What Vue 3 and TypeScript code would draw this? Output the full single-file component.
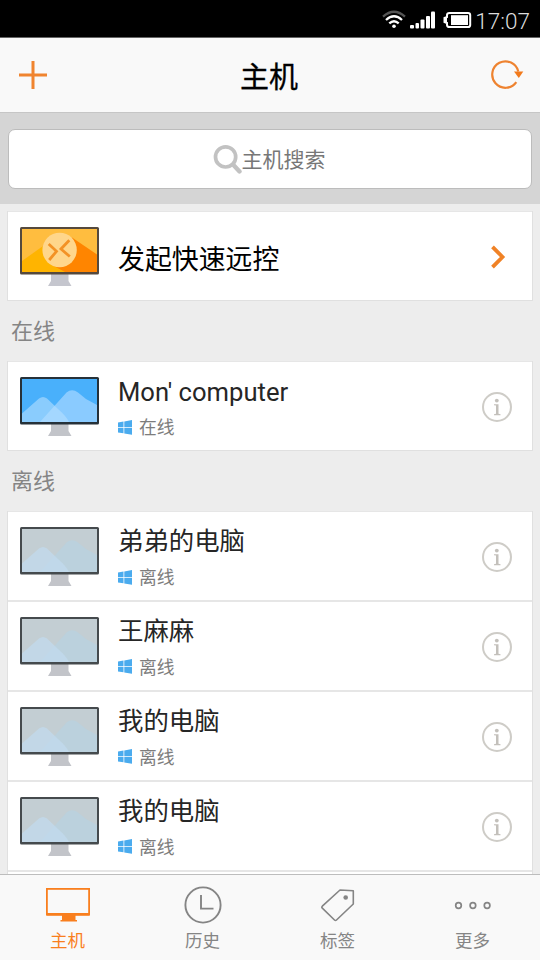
<script setup lang="ts">
interface Host {
  id: number
  name: string
}

interface Tab {
  id: 'hosts' | 'history' | 'tags' | 'more'
  label: string
}

const onlineHosts: Host[] = [{ id: 1, name: "Mon' computer" }]

const offlineHosts: Host[] = [
  { id: 2, name: '弟弟的电脑' },
  { id: 3, name: '王麻麻' },
  { id: 4, name: '我的电脑' },
  { id: 5, name: '我的电脑' },
]

const sections = [
  { key: 'online', label: '在线', hosts: onlineHosts },
  { key: 'offline', label: '离线', hosts: offlineHosts },
]

const tabs: Tab[] = [
  { id: 'hosts', label: '主机' },
  { id: 'history', label: '历史' },
  { id: 'tags', label: '标签' },
  { id: 'more', label: '更多' },
]

const activeTab: Tab['id'] = 'hosts'
</script>

<template>
  <div class="screen">
    <div class="status">
      <svg class="wifi" width="24" height="20" viewBox="0 0 24 20" fill="none" stroke-width="2.3">
        <path d="M1 6.600Q12-3.200 23 6.600" stroke="#555" />
        <path d="M4 10Q12 2.600 20 10" stroke="#fff" />
        <path d="M7.300 13.400Q12 9 16.700 13.400" stroke="#fff" />
        <circle cx="12" cy="16.3" r="1.8" fill="#fff" />
      </svg>
      <svg class="signal" width="26" height="18" viewBox="0 0 26 18" fill="#fff">
        <rect x="0" y="14" width="4" height="3.5" rx="1" />
        <rect x="5.5" y="12" width="3.5" height="5.5" rx="1" />
        <rect x="10.5" y="8.5" width="4" height="9" rx="1" />
        <rect x="16" y="5" width="4" height="12.5" rx="1" />
        <rect x="21" y="0.5" width="4" height="17" rx="1" />
      </svg>
      <svg class="battery" width="29" height="18" viewBox="0 0 29 18">
        <path d="M6.500 1.900H25Q27.200 1.900 27.200 4V14Q27.200 16.100 25 16.100H6.500Q4 16.100 4 14V12L1.500 11V7L4 6V4Q4 1.900 6.500 1.900Z" fill="none" stroke="#fff" stroke-width="2" />
        <rect x="1" y="6" width="3" height="6" fill="#fff" />
        <rect x="8" y="4.2" width="17" height="9.8" fill="#fff" />
      </svg>
      <span class="clock">17:07</span>
    </div>

    <header class="header">
      <svg width="30" height="30" viewBox="0 0 30 30" stroke="#f0842f" stroke-width="3">
        <path d="M15 1V29M1 15H29" />
      </svg>
      <h1 class="title">主机</h1>
      <svg class="refresh" width="34" height="30" viewBox="0 0 34 30">
        <path d="M26.300 22.100A13.200 13.200 0 1 1 28.300 11.600" fill="none" stroke="#ee8330" stroke-width="2.200" />
        <path d="M24 11.600H33.300L28.800 18Z" fill="#f27a1c" />
      </svg>
    </header>

    <div class="search-area">
      <div class="search">
        <svg width="29" height="31" viewBox="0 0 29 31" fill="none" stroke="#c2c2c2">
          <circle cx="12.6" cy="12.9" r="10.1" stroke-width="3.7" />
          <path d="M20 20.500L26.500 27.400" stroke-width="4.4" stroke-linecap="round" />
        </svg>
        <span>主机搜索</span>
      </div>
    </div>

    <main class="content">
      <div class="card">
        <div class="row">
          <svg class="monitor" width="80" height="60" viewBox="0 0 80 60">
            <path d="M31 46H48.500V54L51.500 59H28L31 54Z" fill="#c5c6ce" />
            <rect x="0" y="0" width="79" height="47.600" rx="1.500" fill="#55493d" />
            <rect x="2" y="2" width="75" height="43" fill="#ffbd3f" />
            <path d="M2 34L23 19L46 45H2Z" fill="#ffb400" />
            <path d="M52 10.500L77 27.500V45H45L32 38Z" fill="#ff8500" />
            <circle cx="39.600" cy="23" r="17.200" fill="#ffd68b" />
            <path d="M28.700 17L36.500 24.300L29.200 33M49.300 13.300L41 22L49.800 29.500" fill="none" stroke="#f39226" stroke-width="2.800" />
          </svg>
          <span class="quick-label">发起快速远控</span>
          <svg class="chevron" width="16" height="26" viewBox="0 0 16 26">
            <path d="M2.500 2.800L12.500 13L2.500 23.200" fill="none" stroke="#f08226" stroke-width="3.800" />
          </svg>
        </div>
      </div>

      <template v-for="section in sections" :key="section.key">
        <h2 class="section-label">{{ section.label }}</h2>
        <div class="card" :class="section.key">
          <div v-for="host in section.hosts" :key="host.id" class="row">
            <svg class="monitor" width="80" height="60" viewBox="0 0 80 60">
              <path d="M31 46H48.500V54L51.500 59H28L31 54Z" fill="#c2c4c9" />
              <rect class="frame" x="0" y="0" width="79" height="47.600" rx="1.500" />
              <rect class="sky" x="2" y="2" width="75" height="43" />
              <path class="hill" d="M20 45L46.500 15.500Q52 11 58 15.500L66 22L77 28V45Z" />
              <path class="peak" d="M2 36.500L19 21.500Q23 18.500 27 21.500L38 32Q47 40 49 45H2Z" />
            </svg>
            <div class="info">
              <div class="name">{{ host.name }}</div>
              <div class="state">
                <svg width="14" height="15" viewBox="0 0 14 15" fill="#4aabee">
                  <path d="M0 2.400L5.500 1.500V7H0ZM6.300 1.400L14 0V7H6.300ZM0 7.800H5.500V13.300L0 12.500ZM6.300 7.800H14V14.700L6.300 13.500Z" />
                </svg>
                <span>{{ section.label }}</span>
              </div>
            </div>
            <svg class="detail" width="30" height="30" viewBox="0 0 30 30">
              <circle cx="15" cy="15" r="14" fill="none" stroke="#ceccc7" stroke-width="2" />
              <circle cx="14.800" cy="8.600" r="1.900" fill="#c3c0bb" />
              <path d="M12 12.300H16.500V21.700L18.500 22.300V23.300H12V22.300L14 21.700V13.600L12 13.200Z" fill="#c3c0bb" />
            </svg>
          </div>
        </div>
      </template>
    </main>

    <nav class="tabs">
      <div v-for="tab in tabs" :key="tab.id" class="tab" :class="{ active: tab.id === activeTab }">
        <svg v-if="tab.id === 'hosts'" width="44" height="38" viewBox="0 0 44 38">
          <rect x="0.900" y="2.900" width="42.200" height="25.800" fill="none" stroke="currentColor" stroke-width="1.800" />
          <path d="M1 27H43V29.600H29.500V34H31V35.600H14.500V34H16V29.600H1Z" fill="currentColor" />
        </svg>
        <svg v-else-if="tab.id === 'history'" width="38" height="38" viewBox="0 0 38 38" fill="none" stroke="currentColor" stroke-width="1.900">
          <circle cx="19" cy="19" r="17.600" />
          <path d="M17 9V22.600H29.500" />
        </svg>
        <svg v-else-if="tab.id === 'tags'" width="38" height="38" viewBox="0 0 38 38">
          <path d="M21 4L34.300 4.700V18L17.500 34Q16.500 35 15.500 34L3.300 22.200Q2.300 21.200 3.300 20.200Z" fill="none" stroke="currentColor" stroke-width="1.600" stroke-linejoin="round" />
          <circle cx="26.700" cy="11.500" r="2.300" fill="currentColor" />
        </svg>
        <svg v-else width="38" height="38" viewBox="0 0 38 38" fill="none" stroke="currentColor" stroke-width="1.700">
          <circle cx="4.500" cy="19.500" r="2.800" />
          <circle cx="18.900" cy="19.500" r="2.800" />
          <circle cx="33.100" cy="19.500" r="2.800" />
        </svg>
        <span>{{ tab.label }}</span>
      </div>
    </nav>
  </div>
</template>

<style>
body {
  margin: 0;
  overflow: hidden;
}
</style>

<style scoped>
.screen {
  display: flex;
  flex-direction: column;
  box-sizing: border-box;
  width: 540px;
  height: 960px;
  overflow: hidden;
  background: #ededed;
  font-family: Roboto, "Noto Sans CJK SC", sans-serif;
  color: #262626;
}

svg {
  display: block;
  flex: none;
}

.status {
  display: flex;
  flex: none;
  align-items: center;
  justify-content: flex-end;
  box-sizing: border-box;
  height: 38px;
  padding: 3px 10px 0 0;
  border-bottom: 1px solid #656565;
  background: #000;
}

.wifi {
  margin-right: 4px;
}

.signal {
  margin-right: 7px;
}

.battery {
  margin-right: 3px;
}

.clock {
  padding-top: 2px;
  color: #dedede;
  font-size: 22.500px;
  font-weight: 300;
  line-height: 30px;
}

.header {
  display: flex;
  flex: none;
  align-items: center;
  justify-content: space-between;
  box-sizing: border-box;
  height: 75px;
  padding: 0 16px 0 18px;
  border-bottom: 1px solid #c6c6c6;
  background: #f9f9f9;
}

.title {
  margin: 6px 0 0;
  color: #000;
  font-size: 29px;
  font-weight: 400;
  line-height: 40px;
  -webkit-text-stroke: 0.3px #000;
}

.search-area {
  flex: none;
  box-sizing: border-box;
  height: 91px;
  padding: 16px 8px 15px;
  background: #d5d5d5;
}

.search {
  display: flex;
  align-items: center;
  justify-content: center;
  box-sizing: border-box;
  height: 60px;
  padding: 2px 2px 0 0;
  border: 1px solid #bcbcbc;
  border-radius: 7px;
  background: #fff;
  color: #777;
  font-size: 21px;
  line-height: 30px;
}

.search svg {
  margin-top: -2px;
}

.content {
  flex: 1;
  min-height: 0;
  padding: 7px 7px 0;
  overflow: hidden;
}

.card {
  border: 1px solid #e0e0e0;
  border-top: 0;
  background: #fff;
}

.offline {
  padding-bottom: 8px;
}

.row {
  display: flex;
  align-items: center;
  box-sizing: border-box;
  height: 90px;
  padding: 1px 20px 0 12px;
  border-top: 2px solid #e6e6e6;
}

.card .row:first-child {
  height: 89px;
  padding-top: 2px;
  border-top-width: 1px;
}

.offline .row:last-child {
  height: 92px;
  border-bottom: 2px solid #e6e6e6;
}

.monitor {
  margin-right: 18px;
}

.quick-label {
  flex: 1;
  padding-top: 5px;
  color: #000;
  font-size: 26.900px;
  line-height: 40px;
}

.chevron {
  margin-right: 6px;
}

.section-label {
  margin: 0;
  padding: 1px 4px 0;
  color: #858585;
  font-size: 22px;
  font-weight: 400;
  line-height: 60px;
  height: 60px;
  box-sizing: border-box;
}

.frame {
  fill: #263139;
}

.sky {
  fill: #49b0fb;
}

.hill {
  fill: #8acbff;
}

.peak {
  fill: #b5e0ff;
  fill-opacity: 0.6;
}

.offline .frame {
  fill: #454a4d;
}

.offline .sky {
  fill: #c3ced3;
}

.offline .hill {
  fill: #bbd1dd;
}

.offline .peak {
  fill: #c2dbef;
  fill-opacity: 0.7;
}

.info {
  flex: 1;
  padding-top: 4px;
}

.name {
  font-size: 25.400px;
  line-height: 36px;
}

.online .name {
  padding-top: 1px;
  margin-bottom: -1px;
  font-size: 25.600px;
}

.state {
  display: flex;
  align-items: center;
  gap: 7px;
  color: #7d7d7d;
  font-size: 17.800px;
  line-height: 34px;
}

.state span {
  padding-top: 2px;
}

.tabs {
  display: flex;
  flex: none;
  box-sizing: border-box;
  height: 86px;
  border-top: 1px solid #bdbdbd;
  background: #f9f9f9;
}

.tab {
  display: flex;
  flex: 1;
  flex-direction: column;
  align-items: center;
  padding-top: 11px;
  color: #858585;
  font-size: 17.500px;
  line-height: 35px;
}

.tab.active {
  color: #f97f1e;
}
</style>
